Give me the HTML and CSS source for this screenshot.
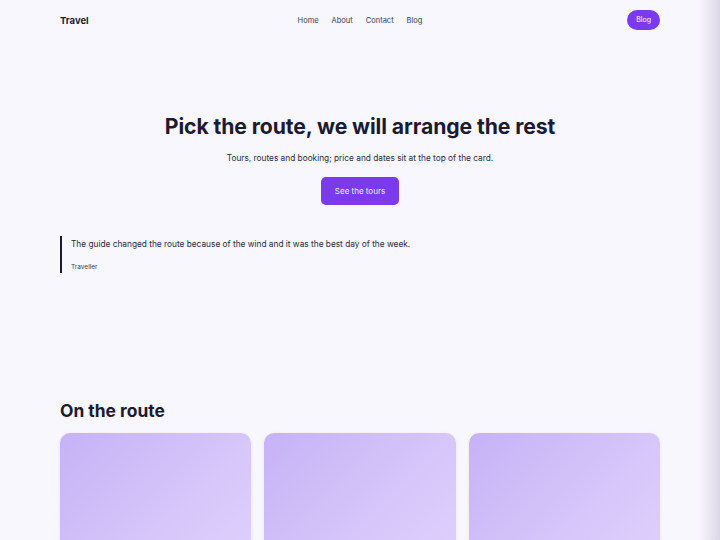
FILE: index.html
```html
<!DOCTYPE html>
<html>
<head>
<meta charset="utf-8">
<link rel="stylesheet" href="styles.css">
</head>
<body>
<div class="page">
  <header class="nav">
    <div class="brand">Travel</div>
    <nav class="links">
      <a>Home</a><a>About</a><a>Contact</a><a>Blog</a>
    </nav>
    <div class="right"><a class="pill">Blog</a></div>
  </header>
  <section class="hero">
    <h1>Pick the route, we will arrange the rest</h1>
    <p class="sub">Tours, routes and booking; price and dates sit at the top of the card.</p>
    <a class="cta">See the tours</a>
  </section>
  <blockquote class="quote">
    <p>The guide changed the route because of the wind and it was the best day of the week.</p>
    <cite>Traveller</cite>
  </blockquote>
  <section class="route">
    <h2>On the route</h2>
    <div class="cards">
      <div class="card"></div>
      <div class="card"></div>
      <div class="card"></div>
    </div>
  </section>
</div>
<div class="edge"></div>
</body>
</html>
```
FILE: styles.css
```css
html, body { margin: 0; padding: 0; }
body {
  background: #f9f7fe;
  font-family: "Inter", "Noto Sans", sans-serif;
  color: #1c1a33;
  overflow: hidden;
  height: 540px;
}
.page { width: 600px; margin: 0 auto; }
.nav {
  display: grid;
  grid-template-columns: 1fr auto 1fr;
  align-items: center;
  height: 40px;
}
.brand { font-size: 9.5px; font-weight: 700; }
.links { display: flex; gap: 13px; font-size: 7.5px; color: #3b3950; }
.right { display: flex; justify-content: flex-end; }
.pill {
  background: #7c3aed;
  color: #fff;
  font-size: 7px;
  padding: 0 9px;
  height: 20px;
  line-height: 20px;
  border-radius: 10px;
}
.hero { text-align: center; padding-top: 72px; }
.hero h1 { margin: 0; font-size: 21.2px; font-weight: 700; letter-spacing: -0.1px; line-height: 28px; }
.sub { margin: 12px 0 0; font-size: 8.3px; color: #2c2a40; line-height: 12px; }
.cta {
  display: inline-block;
  margin-top: 13px;
  background: #7c3aed;
  color: #f3ecff;
  font-size: 8px;
  width: 78px;
  height: 28px;
  line-height: 28px;
  border-radius: 5px;
}
.quote {
  margin: 31px 0 0;
  border-left: 2px solid #1c1a33;
  padding: 2px 0 1px 9px;
}
.quote p { margin: 0; font-size: 8.3px; line-height: 12px; color: #2a283c; }
.quote cite { display: block; margin-top: 12px; font-style: normal; font-size: 6.5px; color: #3b3950; line-height: 10px; }
.route { margin-top: 127px; }
.route h2 { margin: 0; font-size: 17.4px; font-weight: 700; line-height: 22px; }
.cards { display: grid; grid-template-columns: repeat(3, 1fr); gap: 13px; margin-top: 11px; }
.card {
  height: 200px;
  border-radius: 10px;
  background: linear-gradient(135deg, #c6b2f6 0%, #d6c6fa 50%, #e2d6fd 100%);
  box-shadow: 0 1px 4px rgba(120, 80, 200, 0.12);
}
.edge {
  position: fixed;
  top: 0; right: 0;
  width: 22px; height: 100%;
  background: linear-gradient(to right, rgba(214,210,226,0) 0%, rgba(214,210,226,0.45) 55%, rgba(214,210,226,0.85) 100%);
  pointer-events: none;
}
```
